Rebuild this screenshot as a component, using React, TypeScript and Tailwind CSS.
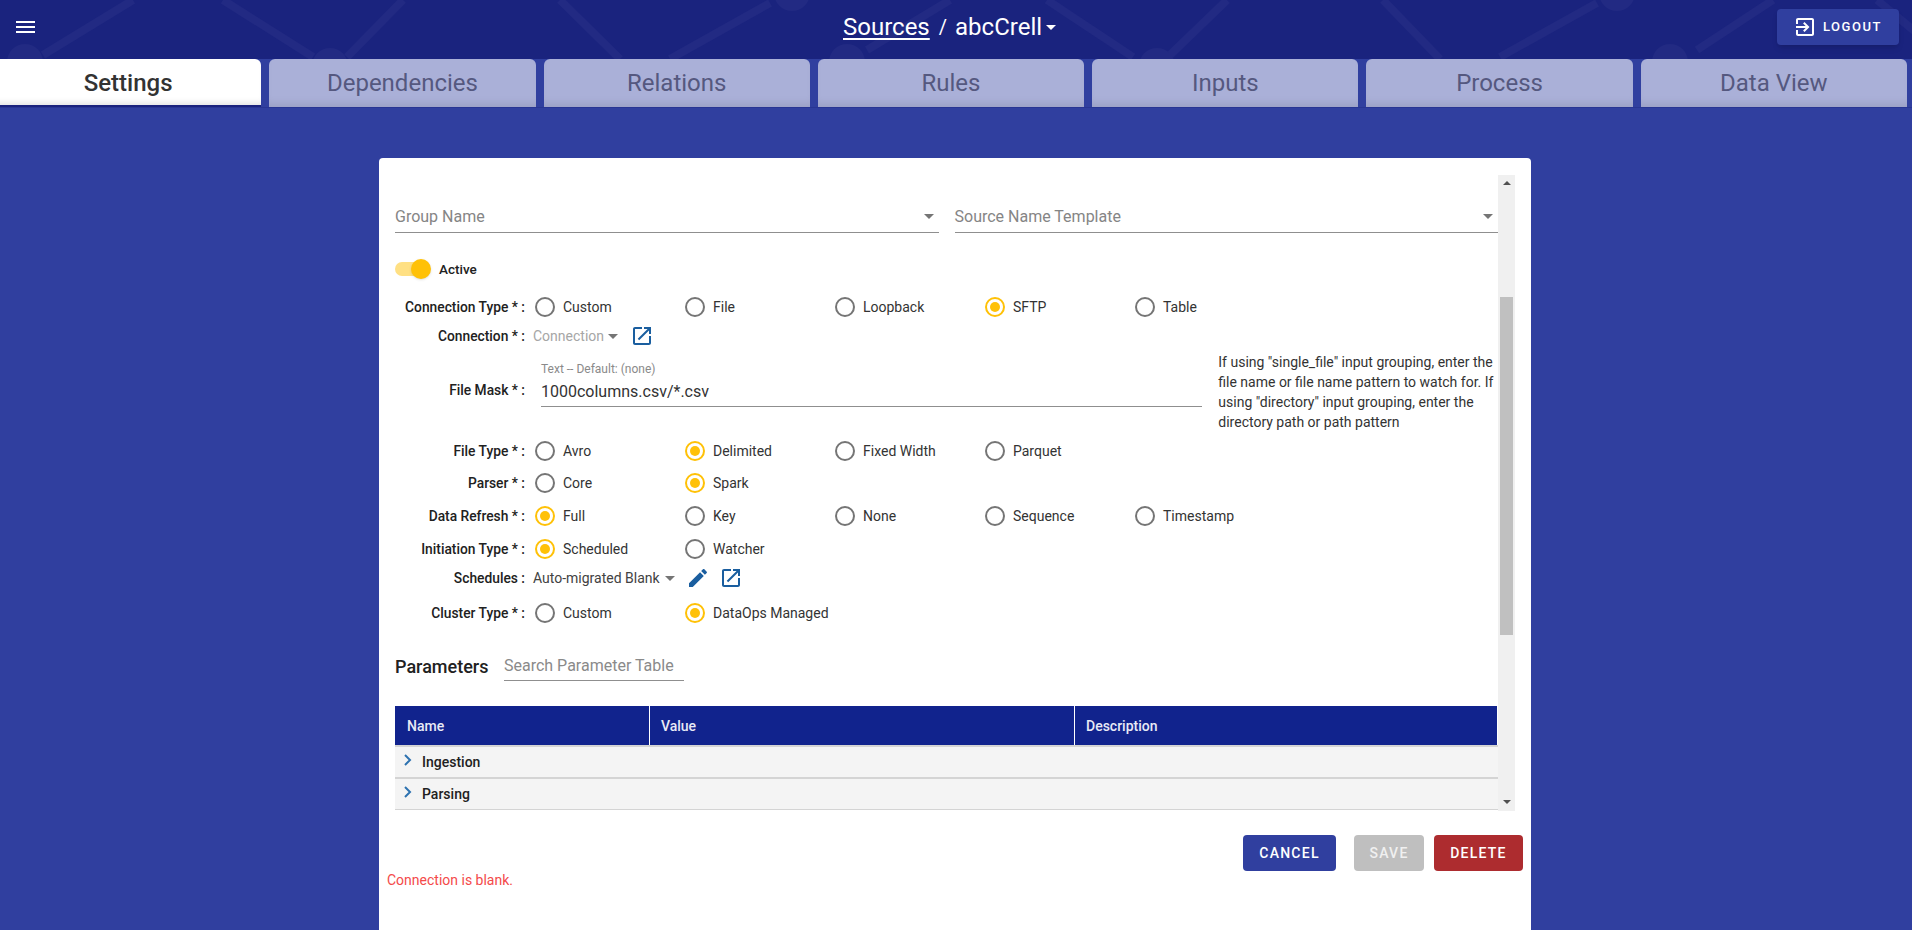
import type { ReactNode } from "react";

const TABS = ["Settings", "Dependencies", "Relations", "Rules", "Inputs", "Process", "Data View"];

// background strokes of the app bar, in page pixels
const PATTERN_LINES = [
  [43, 55, 133, 0], [223, 0, 313, 57], [347, 57, 403, 0], [560, 0, 620, 59], [670, 59, 770, 3],
  [867, 50, 950, 0], [1047, 0, 1133, 57], [1170, 55, 1227, 0], [1383, 0, 1440, 59],
  [1500, 57, 1597, 3], [1697, 50, 1773, 0], [1877, 0, 1935, 48],
];
const PATTERN_DOTS = [
  [25, 62], [330, 66], [792, -7], [847, 62], [1157, 66], [1617, -7], [1670, 62],
];

function HeaderPattern() {
  return (
    <svg className="absolute inset-0 h-[59px] w-full" aria-hidden="true">
      <g stroke="#222a83" strokeWidth="8" fill="#222a83">
        {PATTERN_LINES.map(([x1, y1, x2, y2]) => (
          <line key={x1} x1={x1} y1={y1} x2={x2} y2={y2} />
        ))}
        {PATTERN_DOTS.map(([cx, cy]) => (
          <circle key={cx} cx={cx} cy={cy} r="18" stroke="none" />
        ))}
      </g>
    </svg>
  );
}

function Caret({ className }: { className: string }) {
  return (
    <svg viewBox="0 0 10 5" className={className} fill="currentColor">
      <path d="M0 0h10L5 5z" />
    </svg>
  );
}

function OpenIcon({ className = "" }: { className?: string }) {
  return (
    <svg viewBox="0 0 24 24" className={`h-6 w-6 shrink-0 fill-[#1a5e9f] ${className}`}>
      <path d="M19 19H5V5h7V3H5c-1.11 0-2 .9-2 2v14c0 1.1.89 2 2 2h14c1.1 0 2-.9 2-2v-7h-2v7zM14 3v2h3.59l-9.83 9.83 1.41 1.41L19 6.41V10h2V3h-7z" />
    </svg>
  );
}

function Radio({ label, checked }: { label: string; checked?: boolean }) {
  return (
    <div className="flex w-[150px] items-center gap-2">
      <span
        className={`flex h-5 w-5 shrink-0 items-center justify-center rounded-full border-2 ${
          checked ? "border-[#ffc107]" : "border-[#757575]"
        }`}
      >
        {checked && <span className="h-2.5 w-2.5 rounded-full bg-[#ffc107]" />}
      </span>
      <span className="text-sm text-[#333]">{label}</span>
    </div>
  );
}

function Label({ children }: { children: ReactNode }) {
  return <div className="w-[130px] shrink-0 text-right text-[13.8px] font-medium whitespace-nowrap text-[#212121]">{children}</div>;
}

function RadioRow({ label, options, checked, className }: { label: string; options: string[]; checked: string; className: string }) {
  return (
    <div className={`flex h-5 items-center ${className}`}>
      <Label>{label}</Label>
      <div className="ml-[10px] flex">
        {options.map((o) => (
          <Radio key={o} label={o} checked={o === checked} />
        ))}
      </div>
    </div>
  );
}

function SelectField({ label }: { label: string }) {
  return (
    <div className="flex h-[33px] flex-1 items-center justify-between border-b-[1.5px] border-[#8f8f8f] pt-[1px] pr-[5px]">
      <span className="text-base text-[#858585]">{label}</span>
      <Caret className="h-[5px] w-[10px] text-[#757575]" />
    </div>
  );
}

function ParamGroup({ name, className }: { name: string; className: string }) {
  return (
    <div className={`flex items-center bg-[#f4f4f4] pl-[9px] ${className}`}>
      <svg viewBox="0 0 8 12" className="mb-[4px] h-3 w-2 fill-none stroke-[#2d72b0] stroke-2">
        <path d="M1 1l5 5-5 5" />
      </svg>
      <span className="ml-[10px] text-sm font-medium text-[#212121]">{name}</span>
    </div>
  );
}

function Scrollbar() {
  return (
    <div className="flex w-[17px] shrink-0 flex-col items-center bg-[#f0f0f0]">
      <Caret className="mt-[6px] h-[4px] w-[8px] rotate-180 text-[#505050]" />
      <div className="mt-[112px] h-[338px] w-[13px] bg-[#c0c0c0]" />
      <Caret className="mt-auto mb-[7px] h-[4px] w-[8px] text-[#505050]" />
    </div>
  );
}

export default function App() {
  return (
    <div className="h-[930px] overflow-hidden bg-[#303f9f] font-['Roboto',sans-serif]">
      <header className="relative flex h-[59px] items-center bg-[#1a237e] pb-[5px] text-white">
        <HeaderPattern />
        <div className="relative flex w-[843px] pl-[16px]">
          <svg viewBox="0 0 19 12" className="h-3 w-[19px] fill-white">
            <path d="M0 0h19v2H0zM0 5h19v2H0zM0 10h19v2H0z" />
          </svg>
        </div>
        <div className="relative flex items-center text-2xl">
          <span className="underline decoration-2 underline-offset-[3px]">Sources</span>
          <span className="ml-[9px] text-xl">/</span>
          <span className="ml-[8px]">abcCrell</span>
          <Caret className="ml-[4px] h-[5px] w-[10px]" />
        </div>
        <button className="relative mr-[13px] ml-auto flex h-9 w-[122px] items-center rounded bg-[#303f9f] pl-4 text-[13px] font-medium tracking-[1.5px] shadow-md">
          <svg viewBox="0 0 24 24" className="h-6 w-6 fill-white">
            <path d="M10.09 15.59L11.5 17l5-5-5-5-1.41 1.41L12.67 11H3v2h9.67l-2.58 2.59zM19 3H5c-1.11 0-2 .9-2 2v4h2V5h14v14H5v-4H3v4c0 1.1.89 2 2 2h14c1.1 0 2-.9 2-2V5c0-1.1-.9-2-2-2z" />
          </svg>
          <span className="ml-[6px]">LOGOUT</span>
        </button>
      </header>

      <nav className="ml-[-5px] flex h-[48px] w-[1912px] gap-2">
        {TABS.map((tab, i) => (
          <div
            key={tab}
            className={`flex flex-1 items-center justify-center rounded-t-md text-2xl ${
              i === 0
                ? "border-b-2 border-[#1a237e] bg-white pt-[2px] font-medium text-[#333] shadow-[inset_0_-6px_6px_-4px_rgba(0,0,0,0.12)]"
                : "bg-[#aab0d8] text-[#55587f] shadow-[inset_0_-8px_8px_-5px_rgba(0,0,0,0.1)]"
            }`}
          >
            {tab}
          </div>
        ))}
      </nav>
      <div className="h-px bg-[#283593]" />

      <main className="mt-[50px] ml-[379px] h-[772px] w-[1152px] rounded-t bg-white">
        <div className="flex pt-[17px] pr-4 pl-4">
          <div className="h-[636px] w-[1103px]">
            <div className="flex gap-4 pt-[25px]">
              <SelectField label="Group Name" />
              <SelectField label="Source Name Template" />
            </div>

            <div className="mt-[26px] flex h-5 items-center">
              <div className="relative h-[14px] w-[34px] rounded-full bg-[#ffe083]">
                <span className="absolute top-[-3px] right-[-2px] h-5 w-5 rounded-full bg-[#ffc107] shadow" />
              </div>
              <span className="ml-[10px] text-[13.5px] font-medium text-[#212121]">Active</span>
            </div>

            <RadioRow className="mt-[18px]" label="Connection Type * :" options={["Custom", "File", "Loopback", "SFTP", "Table"]} checked="SFTP" />

            <div className="mt-[9px] flex h-5 items-center">
              <Label>Connection * :</Label>
              <span className="ml-2 text-sm text-[#a6a6a6]">Connection</span>
              <Caret className="ml-[4px] h-[5px] w-[10px] text-[#757575]" />
              <OpenIcon className="ml-[12px]" />
            </div>

            <div className="mt-[6px] flex h-20">
              <div className="flex h-[76px] items-center">
                <Label>File Mask * :</Label>
              </div>
              <div className="ml-4 w-[662px] pt-[10px]">
                <div className="text-xs leading-[14px] text-[#8a8a8a]">Text -- Default: (none)</div>
                <div className="flex h-[31px] items-center border-b-[1.5px] border-[#8f8f8f] pt-[2px] text-base text-[#333]">1000columns.csv/*.csv</div>
              </div>
              <p className="ml-4 w-[280px] text-sm leading-5 text-[#333]">
                If using "single_file" input grouping, enter the file name or file name pattern to watch for. If using "directory" input grouping, enter the directory path or path pattern
              </p>
            </div>

            <RadioRow className="mt-[9px]" label="File Type * :" options={["Avro", "Delimited", "Fixed Width", "Parquet"]} checked="Delimited" />
            <RadioRow className="mt-[12px]" label="Parser * :" options={["Core", "Spark"]} checked="Spark" />
            <RadioRow className="mt-[13px]" label="Data Refresh * :" options={["Full", "Key", "None", "Sequence", "Timestamp"]} checked="Full" />
            <RadioRow className="mt-[13px]" label="Initiation Type * :" options={["Scheduled", "Watcher"]} checked="Scheduled" />

            <div className="mt-[9px] flex h-5 items-center">
              <Label>Schedules :</Label>
              <span className="ml-2 text-sm text-[#424242]">Auto-migrated Blank</span>
              <Caret className="ml-[5px] h-[5px] w-[10px] text-[#757575]" />
              <svg viewBox="0 0 24 24" className="ml-[11px] h-6 w-6 fill-[#1a5e9f]">
                <path d="M3 17.25V21h3.75L17.81 9.94l-3.75-3.75L3 17.25zM20.71 7.04c.39-.39.39-1.02 0-1.41l-2.34-2.34c-.39-.39-1.02-.39-1.41 0l-1.83 1.83 3.75 3.75 1.83-1.83z" />
              </svg>
              <OpenIcon className="ml-[9px]" />
            </div>

            <RadioRow className="mt-[15px]" label="Cluster Type * :" options={["Custom", "DataOps Managed"]} checked="DataOps Managed" />

            <div className="mt-[29px] flex h-[29px] items-center">
              <span className="w-[109px] text-lg font-medium text-[#212121]">Parameters</span>
              <div className="flex h-[29px] w-[180px] items-center border-b border-[#8f8f8f] text-base text-[#8a8a8a]">Search Parameter Table</div>
            </div>

            <div className="mt-[25px]">
              <div className="mr-px grid h-[39px] grid-cols-[255px_425px_1fr] bg-[#11238d] text-sm font-medium text-[#e8eaf6]">
                <div className="flex items-center border-r border-white pl-3">Name</div>
                <div className="flex items-center border-r border-white pl-[11px]">Value</div>
                <div className="flex items-center pl-[11px]">Description</div>
              </div>
              <ParamGroup name="Ingestion" className="h-[34px] border-y-2 border-[#d4d4d4]" />
              <ParamGroup name="Parsing" className="h-[31px] border-b border-[#d4d4d4]" />
            </div>
          </div>
          <Scrollbar />
        </div>

        <div className="mt-6 flex justify-end pr-2 text-sm font-medium tracking-[1.25px] text-white">
          <button className="h-9 w-[93px] rounded bg-[#303f9f]">CANCEL</button>
          <button className="ml-[18px] h-9 w-[70px] rounded bg-[#bfbfbf] text-[#f0f0f0]">SAVE</button>
          <button className="ml-[10px] h-9 w-[89px] rounded bg-[#ad2c2f]">DELETE</button>
        </div>
        <div className="mt-[-1px] pl-2 text-sm leading-5 text-[#f44a4a]">Connection is blank.</div>
      </main>
    </div>
  );
}
